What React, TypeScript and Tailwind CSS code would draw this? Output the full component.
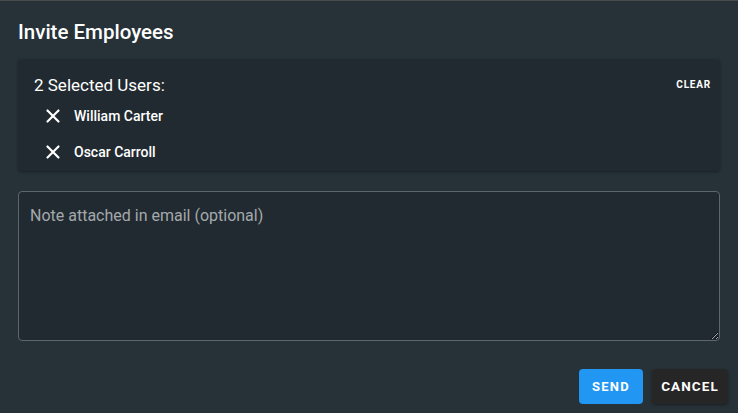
import { X } from "lucide-react";

const users = ["William Carter", "Oscar Carroll"];

export default function App() {
  return (
    <div
      className="relative h-[413px] w-[738px] overflow-hidden border-t border-[#4a4a4a] bg-[#263238] text-white"
      style={{ fontFamily: "Roboto, 'Liberation Sans', sans-serif" }}
    >
      <div className="absolute left-[95px] top-[-1px] h-px w-[6px] bg-[#9a9a9a]" />

      <div className="px-[18px]">
        <h1 className="pt-[19px] text-[20.5px] font-medium leading-[24px]">Invite Employees</h1>

        <div className="mt-[15px] h-[112px] rounded bg-[#212a30] pl-4 pr-[9px] pt-[15px] shadow-[0_1px_3px_rgba(0,0,0,0.35)]">
          <div className="flex items-start justify-between">
            <p className="text-[17px] leading-[22px]">2 Selected Users:</p>
            <button className="mt-[3px] text-[10px] font-bold tracking-[0.08em]">CLEAR</button>
          </div>
          <ul className="mt-[9px] flex flex-col gap-[14px]">
            {users.map((u) => (
              <li key={u} className="flex items-center gap-[10px] pl-[8px]">
                <X size={22} strokeWidth={2.4} className="text-white" />
                <span className="text-[14px] font-medium leading-[22px]">{u}</span>
              </li>
            ))}
          </ul>
        </div>

        <textarea
          placeholder="Note attached in email (optional)"
          className="mt-[20px] block h-[150px] w-full resize-y rounded border border-[#5c666d] bg-[#212a30] px-[11px] py-[13px] text-[16px] leading-[22px] text-white placeholder:text-[#a4a9ad] focus:outline-none"
        />

        <div className="mt-[28px] flex justify-end gap-[9px]">
          <button className="h-[35px] w-[64px] rounded bg-[#2196f3] text-[13px] font-bold tracking-[0.1em] text-white">
            SEND
          </button>
          <button className="mr-[-8px] h-[35px] w-[76px] rounded bg-[#262626] text-[13.5px] font-bold tracking-[0.08em] text-white shadow-[0_1px_3px_rgba(0,0,0,0.4)]">
            CANCEL
          </button>
        </div>
      </div>
    </div>
  );
}
